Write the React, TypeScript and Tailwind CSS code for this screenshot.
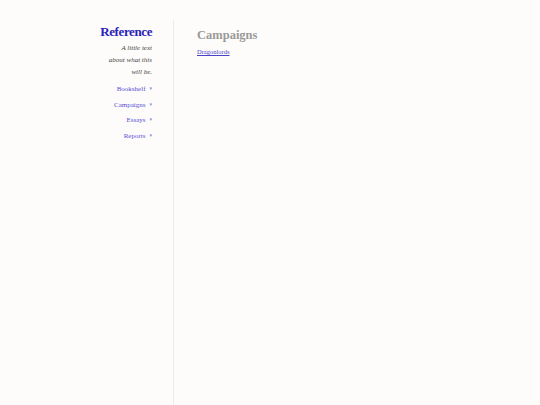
export default function App() {
  const nav = ['Bookshelf', 'Campaigns', 'Essays', 'Reports'];
  return (
    <div
      className="flex min-h-[405px] bg-[#fdfcfa] text-[#333]"
      style={{ fontFamily: '"Liberation Serif", "DejaVu Serif", serif' }}
    >
      <aside className="flex w-[173px] shrink-0 flex-col items-end pr-[21px] pt-[22px]">
        <h1 className="text-[13px] font-bold leading-[20px] tracking-[-0.4px] text-[#2b22b8]">
          Reference
        </h1>
        <p className="mt-0 text-right text-[7px] italic leading-[12px] text-[#444]">
          A little text
          <br />
          about what this
          <br />
          will be.
        </p>
        <nav className="mt-[6px] flex flex-col items-end gap-[5.7px]">
          {nav.map((item) => (
            <a
              key={item}
              href="#"
              className="flex items-center gap-[4px] text-[7px] leading-[10px] text-[#5a4fd6]"
            >
              {item}
              <span className="text-[5px] text-[#8a84dc]">▾</span>
            </a>
          ))}
        </nav>
      </aside>
      <div className="mt-[20px] w-px shrink-0 bg-[#ecebe8]" />
      <main className="pl-[23px] pt-[25px]">
        <h2 className="text-[12.5px] font-bold leading-[20px] text-[#9a9a98]">Campaigns</h2>
        <a href="#" className="mt-[2px] block text-[6.5px] leading-[10px] text-[#4a44c8] underline">
          Dragonlords
        </a>
      </main>
    </div>
  );
}
